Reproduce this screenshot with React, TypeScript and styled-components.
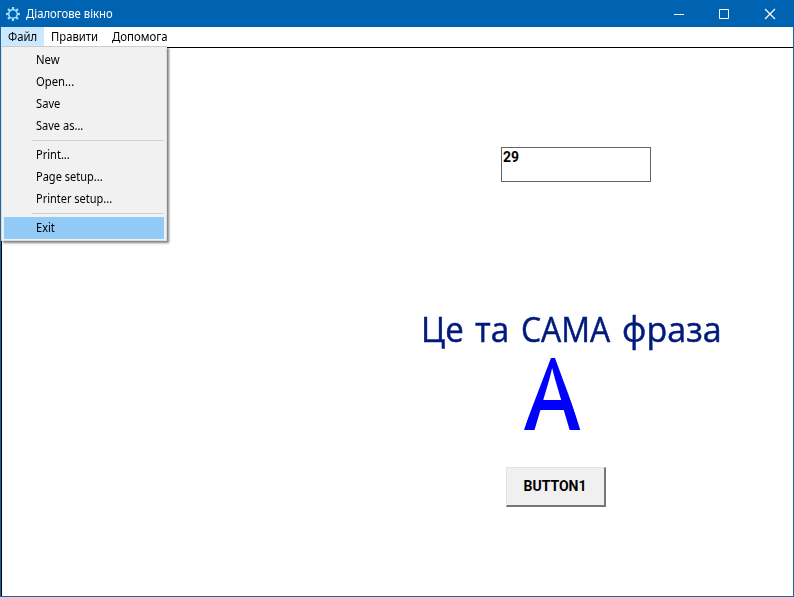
import React from "react";
import styled, { createGlobalStyle } from "styled-components";

const GlobalStyle = createGlobalStyle`
  * { box-sizing: border-box; }
  body { margin: 0; overflow: hidden; background: #fff; font: 12px/16px "Noto Sans", "Open Sans", sans-serif; }
`;

const Window = styled.div`
  display: flex;
  flex-direction: column;
  width: 794px;
  height: 597px;
  border: 1px solid #1c66a2;
  border-top: 0;
  background: #fff;
`;

const TitleBar = styled.header`
  display: flex;
  align-items: center;
  height: 27px;
  margin: 0 -1px;
  padding: 0 1px 0 5px;
  background: #0063b1;
  color: #fff;
`;

const Title = styled.h1`
  flex: 1;
  margin: 1px 0 0 5px;
  font: inherit;
`;

const CaptionButton = styled.button`
  display: grid;
  place-items: center;
  width: 45.5px;
  height: 27px;
  padding: 0;
  border: 0;
  background: none;
  color: #fff;
`;

const MenuBar = styled.nav`
  position: relative;
  display: flex;
  height: 20px;
  flex: none;
  background: #fff;
`;

const MenuTitle = styled.div<{ $active?: boolean; $width: number }>`
  width: ${(p) => p.$width}px;
  height: 19px;
  padding-left: 7px;
  line-height: 19px;
  white-space: nowrap;
  color: #000;
  background: ${(p) => (p.$active ? "#cce8ff" : "transparent")};
`;

const Fit = styled.span<{ $scale: number }>`
  display: inline-block;
  white-space: nowrap;
  transform: scaleX(${(p) => p.$scale});
  transform-origin: left center;
`;

const Dropdown = styled.div`
  position: absolute;
  z-index: 2;
  top: 19px;
  left: 0;
  width: 166px;
  height: 195px;
  padding: 2px 2px;
  border: 1px solid #dcdcdc;
  border-top-color: #ccc;
  background: #f1f1f1;
  filter: drop-shadow(2px 2px 1px rgba(0, 0, 0, 0.5));
`;

const MenuItem = styled.div<{ $selected?: boolean }>`
  height: 22px;
  padding-left: 32px;
  line-height: 21px;
  color: #000;
  background: ${(p) => (p.$selected ? "#91c9f7" : "transparent")};
`;

const Separator = styled.div`
  height: 1px;
  margin: 3px 0 3px 28px;
  background: #d0d0d0;
`;

const Client = styled.main`
  flex: 1;
  border-top: 1px solid #000;
  border-left: 1px solid #000;
`;

const Edit = styled.div`
  width: 150px;
  height: 35px;
  margin: 99px 0 0 499px;
  padding: 1px 1px;
  border: 1px solid #646464;
  font: bold 14px/16px Roboto, "Liberation Sans", sans-serif;
`;

const Phrase = styled.div`
  display: flex;
  height: 50px;
  margin: 121px 0 0 419px;
  font: 35.5px/50px "Open Sans", sans-serif;
  color: #001b7b;
  -webkit-text-stroke: 0.5px #001b7b;
`;

const Word = styled.div<{ $width: number }>`
  width: ${(p) => p.$width}px;
`;

const Letter = styled.div`
  width: 60px;
  height: 76px;
  margin: 1px 0 0 521.5px;
  font: 600 99px/76px "Open Sans", sans-serif;
  color: #0000ff;
  clip-path: polygon(29px 0, 30px 0, 58px 76px, 0 76px);
`;

const PushButton = styled.button`
  display: block;
  width: 100px;
  height: 40px;
  margin: 37px 0 0 504px;
  padding: 0 1px 2px 0;
  border: 1px solid #e3e3e3;
  border-right: 2px solid #777;
  border-bottom: 2px solid #777;
  background: #f0f0f0;
  color: #000;
  font: bold 14px/16px Roboto, "Liberation Sans", sans-serif;
`;

const teeth = [0, 45, 90, 135, 180, 225, 270, 315];

const Gear = () => (
  <svg width="16" height="16" viewBox="0 0 16 16" fill="none">
    <g stroke="#9fe0ff" strokeWidth="2.2">
      {teeth.map((a) => (
        <path key={a} d="M8 3.5V1" transform={`rotate(${a} 8 8)`} />
      ))}
    </g>
    <circle cx="8" cy="8" r="4.3" stroke="#9fe0ff" strokeWidth="1.6" />
  </svg>
);

export default function App() {
  return (
    <>
      <GlobalStyle />
      <Window>
        <TitleBar>
          <Gear />
          <Title><Fit $scale={0.94}>Діалогове вікно</Fit></Title>
          <CaptionButton aria-label="Minimize">
            <svg width="12" height="12" stroke="currentColor"><path d="M1 6.5h10" /></svg>
          </CaptionButton>
          <CaptionButton aria-label="Maximize">
            <svg width="12" height="12" stroke="currentColor" fill="none"><path d="M.5 1.5h9v9h-9z" /></svg>
          </CaptionButton>
          <CaptionButton aria-label="Close">
            <svg width="12" height="12" stroke="currentColor" strokeWidth="1.2"><path d="M1 1l10 10M11 1L1 11" /></svg>
          </CaptionButton>
        </TitleBar>
        <MenuBar>
          <MenuTitle $active $width={43}><Fit $scale={0.94}>Файл</Fit></MenuTitle>
          <MenuTitle $width={61}><Fit $scale={0.94}>Правити</Fit></MenuTitle>
          <MenuTitle $width={70}><Fit $scale={0.95}>Допомога</Fit></MenuTitle>
          <Dropdown>
            <MenuItem><Fit $scale={0.94}>New</Fit></MenuItem>
            <MenuItem><Fit $scale={0.94}>Open...</Fit></MenuItem>
            <MenuItem><Fit $scale={0.93}>Save</Fit></MenuItem>
            <MenuItem><Fit $scale={0.92}>Save as...</Fit></MenuItem>
            <Separator />
            <MenuItem><Fit $scale={0.92}>Print...</Fit></MenuItem>
            <MenuItem><Fit $scale={0.92}>Page setup...</Fit></MenuItem>
            <MenuItem><Fit $scale={0.915}>Printer setup...</Fit></MenuItem>
            <Separator />
            <MenuItem $selected><Fit $scale={0.92}>Exit</Fit></MenuItem>
          </Dropdown>
        </MenuBar>
        <Client>
          <Edit>29</Edit>
          <Phrase>
            <Word $width={54}><Fit $scale={0.93}>Це</Fit></Word>
            <Word $width={46}><Fit $scale={0.94}>та</Fit></Word>
            <Word $width={101}><Fit $scale={0.9}>САМА</Fit></Word>
            <Word $width={100}><Fit $scale={0.96}>фраза</Fit></Word>
          </Phrase>
          <Letter><Fit $scale={0.86}>A</Fit></Letter>
          <PushButton>BUTTON1</PushButton>
        </Client>
      </Window>
    </>
  );
}
